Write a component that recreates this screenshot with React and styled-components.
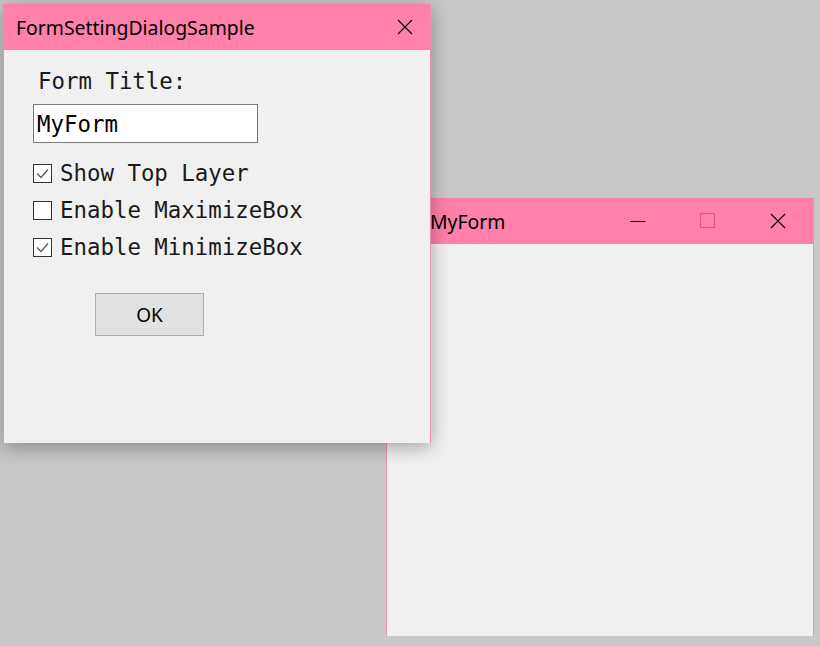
import React from "react";
import styled, { createGlobalStyle } from "styled-components";

const Global = createGlobalStyle`
  html, body { margin: 0; padding: 0; }
  body { background: #c8c8c8; width: 820px; height: 646px; overflow: hidden; }
`;

const Desktop = styled.div`
  position: relative;
  width: 820px;
  height: 646px;
  background: #c8c8c8;
`;

const Window = styled.div`
  position: absolute;
  left: ${(p) => p.$x}px;
  top: ${(p) => p.$y}px;
  width: ${(p) => p.$w}px;
  height: ${(p) => p.$h}px;
  z-index: ${(p) => p.$z};
  display: flex;
  flex-direction: column;
  background: #f0f0f0;
  border-left: 1px solid #f090b0;
  border-right: 1px solid #f090b0;
  box-sizing: border-box;
  box-shadow: ${(p) => (p.$active ? "0 4px 18px rgba(0,0,0,0.32)" : "none")};
`;

const TitleBar = styled.div`
  height: 46px;
  flex: none;
  background: #ff80aa;
  display: flex;
  align-items: center;
  padding-left: ${(p) => p.$pad}px;
  font-family: "Noto Sans", "Open Sans", sans-serif;
  font-size: 19.4px;
  color: #000;
`;

const TitleText = styled.span`
  flex: 1;
  white-space: nowrap;
`;

const CaptionBtn = styled.div`
  width: ${(p) => p.$w || 70}px;
  height: 46px;
  display: flex;
  align-items: center;
  justify-content: center;
`;

const Body = styled.div`
  flex: 1;
  display: flex;
  flex-direction: column;
  align-items: flex-start;
  padding: 16px 0 0 29px;
  font-family: "DejaVu Sans Mono", "Liberation Mono", monospace;
  font-size: 22.4px;
  color: #1a1a1a;
`;

const Label = styled.div`
  margin-left: 5px;
  height: 30px;
  line-height: 30px;
`;

const TextBox = styled.div`
  margin-top: 8px;
  width: 225px;
  height: 39px;
  box-sizing: border-box;
  background: #fff;
  border: 1px solid #7a7a7a;
  padding-left: 3px;
  display: flex;
  align-items: center;
  color: #000;
`;

const CheckList = styled.div`
  margin-top: 16px;
  display: flex;
  flex-direction: column;
  gap: 9px;
`;

const CheckRow = styled.div`
  height: 28px;
  display: flex;
  align-items: center;
  gap: 8px;
`;

const Box = styled.div`
  width: 19px;
  height: 19px;
  box-sizing: border-box;
  border: 1px solid #333;
  background: #fff;
  display: flex;
  align-items: center;
  justify-content: center;
`;

const OkButton = styled.div`
  margin-top: 32px;
  margin-left: 62px;
  width: 109px;
  height: 43px;
  box-sizing: border-box;
  background: #e1e1e1;
  border: 1px solid #adadad;
  display: flex;
  align-items: center;
  justify-content: center;
  font-family: "Noto Sans", "Open Sans", sans-serif;
  font-size: 19px;
  color: #000;
`;

const Check = () => (
  <svg width="15" height="15" viewBox="0 0 15 15">
    <path d="M2 7.5 L6 11.5 L13 3.5" fill="none" stroke="#5a5a5a" strokeWidth="1.3" />
  </svg>
);

const CloseIcon = ({ color = "#000" }) => (
  <svg width="16" height="16" viewBox="0 0 16 16">
    <path d="M1 1 L15 15 M15 1 L1 15" stroke={color} strokeWidth="1.1" />
  </svg>
);

const MinIcon = () => (
  <svg width="16" height="16" viewBox="0 0 16 16">
    <path d="M0.5 8.5 H15.5" stroke="#000" strokeWidth="1.1" />
  </svg>
);

const MaxIcon = () => (
  <svg width="16" height="16" viewBox="0 0 16 16">
    <rect x="0.5" y="0.5" width="14" height="14" fill="none" stroke="#c45e85" strokeWidth="1" />
  </svg>
);

const CheckItem = ({ checked, children }) => (
  <CheckRow>
    <Box>{checked && <Check />}</Box>
    <span>{children}</span>
  </CheckRow>
);

export default function App() {
  return (
    <>
      <Global />
      <Desktop>
        <Window $x={386} $y={198} $w={428} $h={438} $z={1}>
          <TitleBar $pad={43}>
            <TitleText>MyForm</TitleText>
            <CaptionBtn><MinIcon /></CaptionBtn>
            <CaptionBtn><MaxIcon /></CaptionBtn>
            <CaptionBtn><CloseIcon /></CaptionBtn>
          </TitleBar>
        </Window>
        <Window $x={3} $y={4} $w={428} $h={439} $z={2} $active>
          <TitleBar $pad={12}>
            <TitleText>FormSettingDialogSample</TitleText>
            <CaptionBtn $w={50}><CloseIcon /></CaptionBtn>
          </TitleBar>
          <Body>
            <Label>Form Title:</Label>
            <TextBox>MyForm</TextBox>
            <CheckList>
              <CheckItem checked>Show Top Layer</CheckItem>
              <CheckItem>Enable MaximizeBox</CheckItem>
              <CheckItem checked>Enable MinimizeBox</CheckItem>
            </CheckList>
            <OkButton>OK</OkButton>
          </Body>
        </Window>
      </Desktop>
    </>
  );
}
